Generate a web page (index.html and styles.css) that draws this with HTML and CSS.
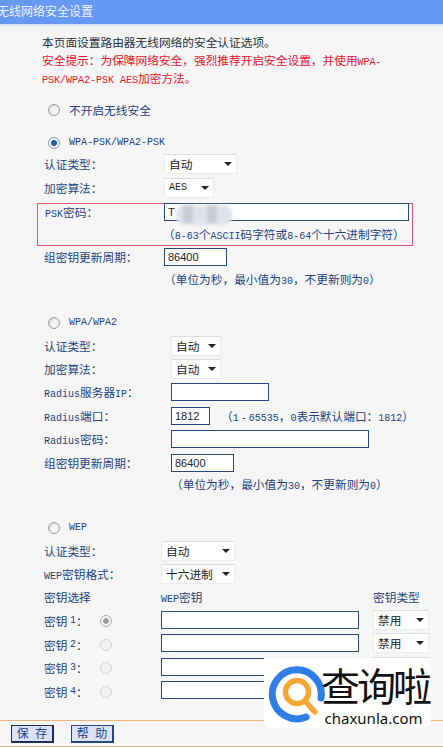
FILE: index.html
```html
<!DOCTYPE html>
<html lang="zh-CN">
<head>
    <meta charset="UTF-8">
    <meta name="viewport" content="width=device-width, initial-scale=1.0">
    <title>无线网络安全设置</title>
    <link rel="stylesheet" href="styles.css">
</head>
<body>
    <div class="title">无线网络安全设置</div>

    <div class="intro">
        <p>本页面设置路由器无线网络的安全认证选项&#x3002;</p>
        <p class="warn">安全提示&#xFF1A;为保障网络安全&#xFF0C;强烈推荐开启安全设置&#xFF0C;并使用<span class="en">WPA-</span></p>
        <p class="warn"><span class="en">PSK/WPA2-PSK AES</span>加密方法&#x3002;</p>
    </div>

    <div class="choice off"><span class="radio"></span><span>不开启无线安全</span></div>

    <div class="choice psk"><span class="radio on"></span><span class="en">WPA-PSK/WPA2-PSK</span></div>
    <div class="form form-a">
        <div class="row"><label>认证类型&#xFF1A;</label><div class="select w73">自动<i></i></div></div>
        <div class="row"><label>加密算法&#xFF1A;</label><div class="select w50"><span class="en">AES</span><i></i></div></div>
        <div class="psk-box">
            <div class="row"><label><span class="en">PSK</span>密码&#xFF1A;</label>
                <div class="pass"><input class="w245" type="text" value="T"><span class="smudge"><b></b><b></b></span></div>
            </div>
            <div class="hint">&#xFF08;<span class="en">8-63</span>个<span class="en">ASCII</span>码字符或<span class="en">8-64</span>个十六进制字符&#xFF09;</div>
        </div>
        <div class="row"><label>组密钥更新周期&#xFF1A;</label><input class="w63" type="text" value="86400"></div>
        <div class="hint">&#xFF08;单位为秒&#xFF0C;最小值为<span class="en">30</span>&#xFF0C;不更新则为<span class="en">0</span>&#xFF09;</div>
    </div>

    <div class="choice wpa"><span class="radio"></span><span class="en">WPA/WPA2</span></div>
    <div class="form form-b">
        <div class="row"><label>认证类型&#xFF1A;</label><div class="select w50">自动<i></i></div></div>
        <div class="row"><label>加密算法&#xFF1A;</label><div class="select w50">自动<i></i></div></div>
        <div class="row"><label><span class="en">Radius</span>服务器<span class="en">IP</span>&#xFF1A;</label><input class="w98" type="text"></div>
        <div class="row"><label><span class="en">Radius</span>端口&#xFF1A;</label><input class="w39" type="text" value="1812"><span class="port-hint">&#xFF08;<span class="en">1 - 65535</span>&#xFF0C;<span class="en">0</span>表示默认端口&#xFF1A;<span class="en">1812</span>&#xFF09;</span></div>
        <div class="row"><label><span class="en">Radius</span>密码&#xFF1A;</label><input class="w198" type="text"></div>
        <div class="row"><label>组密钥更新周期&#xFF1A;</label><input class="w63" type="text" value="86400"></div>
        <div class="hint">&#xFF08;单位为秒&#xFF0C;最小值为<span class="en">30</span>&#xFF0C;不更新则为<span class="en">0</span>&#xFF09;</div>
    </div>

    <div class="choice wep"><span class="radio"></span><span class="en">WEP</span></div>
    <div class="form form-c">
        <div class="row"><label>认证类型&#xFF1A;</label><div class="select w74">自动<i></i></div></div>
        <div class="row"><label><span class="en">WEP</span>密钥格式&#xFF1A;</label><div class="select w74">十六进制<i></i></div></div>
        <div class="keys">
            <div>密钥选择</div><div><span class="en">WEP</span>密钥</div><div>密钥类型</div>
            <div class="key-name">密钥 <span class="en">1</span>&#xFF1A;<span class="radio dot"></span></div><input class="w198" type="text"><div class="select w56">禁用<i></i></div>
            <div class="key-name">密钥 <span class="en">2</span>&#xFF1A;<span class="radio faint"></span></div><input class="w198" type="text"><div class="select w56">禁用<i></i></div>
            <div class="key-name">密钥 <span class="en">3</span>&#xFF1A;<span class="radio faint"></span></div><input class="w198" type="text"><div class="select w56"><i class="push"></i></div>
            <div class="key-name">密钥 <span class="en">4</span>&#xFF1A;<span class="radio faint"></span></div><input class="w198" type="text"><div class="select w56"><i class="push"></i></div>
        </div>
    </div>

    <div class="actions">
        <button class="btn active">保 存</button>
        <button class="btn">帮 助</button>
    </div>

    <div class="stamp">
        <svg class="stamp-logo" width="58" height="62" viewBox="0 0 58 62">
            <path d="M53 33 A24.5 24.5 0 1 0 38 52" fill="none" stroke="#2f7ee8" stroke-width="7" stroke-linecap="round"/>
            <circle cx="29" cy="27" r="11.5" fill="none" stroke="#f7a733" stroke-width="5.5"/>
            <path d="M37 36 L47 47" fill="none" stroke="#f7a733" stroke-width="5.5" stroke-linecap="round"/>
        </svg>
        <div class="stamp-text">
            <div class="stamp-name">查询啦</div>
            <div class="stamp-url">chaxunla.com</div>
        </div>
    </div>
</body>
</html>
```

FILE: styles.css
```css
html, body {
    margin: 0;
    height: 748px;
    overflow: hidden;
}
body {
    position: relative;
    background-color: #f6f6f6;
    color: #23437f;
    font-family: "Noto Sans CJK SC", "Liberation Serif", sans-serif;
    font-size: 11.7px;
    line-height: 18px;
}
p {
    margin: 0;
}
.en {
    font-family: "Liberation Mono", monospace;
    font-size: 10px;
    line-height: 1;
}
.title {
    height: 24px;
    line-height: 22px;
    text-indent: -3px;
    background-color: #6699f4;
    color: #eef3ff;
    font-size: 12px;
    border-bottom: 2px solid #d9e4f7;
    overflow: hidden;
}
.intro {
    margin: 7px 0 0 42px;
    width: 345px;
    color: #26303f;
}
.warn {
    color: #f0102a;
}
.choice {
    display: flex;
    align-items: center;
    gap: 9px;
    height: 18px;
    margin-left: 48px;
}
.off { margin-top: 14px; }
.psk { margin-top: 15px; }
.wpa { margin-top: 21px; }
.wep { margin-top: 20.6px; }
.radio {
    display: inline-block;
    box-sizing: border-box;
    flex: none;
    width: 12px;
    height: 12px;
    border-radius: 50%;
    border: 1px solid #9f9f9f;
    background: radial-gradient(circle at 60% 60%, #f4f4f4 40%, #c4c4c4);
}
.radio.on {
    border-color: #8f9bb0;
    background: radial-gradient(circle, #1f5fa8 38%, #f2f4f8 46%);
}
.radio.dot {
    border-color: #aaa;
    background: radial-gradient(circle, #9a9a9a 36%, #f4f4f4 44%);
}
.radio.faint {
    border-color: #d0d0d0;
    background: #f2f2f2;
}
.form {
    margin-left: 44px;
}
.row {
    display: flex;
    align-items: center;
    height: 24px;
}
.form-a label { width: 120px; }
.form-b { margin-top: 2px; }
.form-b .row { height: 23.4px; }
.form-b label { width: 127px; }
.form-c { margin-top: 2px; }
.form-c .row { height: 23.5px; }
.form-c label { width: 117px; }
input {
    box-sizing: border-box;
    height: 18px;
    padding: 0 3px;
    border: 1px solid #27487f;
    background-color: #fff;
    color: #222;
    font-family: "Liberation Sans", sans-serif;
    font-size: 11px;
    outline: none;
}
.w39 { width: 39px; }
.w63 { width: 63px; }
.w98 { width: 98px; }
.w198 { width: 198px; }
.w245 { width: 245px; }
.select {
    display: flex;
    align-items: center;
    justify-content: space-between;
    box-sizing: border-box;
    height: 20px;
    padding: 0 4px;
    border: 1px solid #ececec;
    border-top-color: #ddd;
    background-color: #fff;
    color: #222;
}
.select .en {
    color: #222;
}
.select i {
    width: 0;
    height: 0;
    border-left: 4px solid transparent;
    border-right: 4px solid transparent;
    border-top: 4px solid #222;
}
.select .push {
    margin-left: auto;
}
.w50 { width: 50px; }
.w56 { width: 56px; }
.w73 { width: 73px; }
.w74 { width: 74px; }
.hint {
    height: 24px;
    line-height: 20px;
    padding-left: 120px;
}
.form-b .hint {
    padding-left: 127px;
}
.psk-box {
    box-sizing: border-box;
    height: 43px;
    margin: 3px 30px -1px -7px;
    padding-left: 7px;
    border: 1px solid #e0566e;
}
.psk-box .row {
    height: 18px;
    margin-top: -1px;
}
.psk-box label {
    width: 119px;
}
.psk-box .hint {
    padding-left: 118px;
    height: 22px;
    line-height: 26px;
}
.pass {
    position: relative;
    display: flex;
}
.smudge {
    position: absolute;
    left: 12px;
    top: 2px;
    display: flex;
    gap: 14px;
    width: 56px;
    height: 20px;
    padding-left: 7px;
    box-sizing: border-box;
    border-radius: 8px;
    background-color: #dfe3ee;
    filter: blur(1.5px);
}
.smudge b {
    width: 10px;
    height: 18px;
    background-color: #c6cbd6;
}
.port-hint {
    margin-left: 11px;
}
.port-hint .en:first-of-type {
    word-spacing: -4px;
}
.keys {
    display: grid;
    grid-template-columns: 117px 212px 56px;
    grid-template-rows: 22px repeat(4, 23.5px);
    align-items: center;
}
.key-name {
    display: flex;
    align-items: center;
    white-space: pre;
    padding-top: 3px;
}
.key-name .radio {
    margin-left: 12px;
}
.actions {
    position: absolute;
    left: 0;
    right: 0;
    top: 720px;
    box-sizing: border-box;
    height: 27px;
    display: flex;
    align-items: center;
    gap: 17px;
    padding-left: 11px;
    border-top: 1px solid #f3b27c;
    border-bottom: 1px solid #e9bb8c;
}
.btn {
    box-sizing: border-box;
    width: 43px;
    height: 18px;
    padding: 0;
    border: 1px solid #27487f;
    border-right-width: 2px;
    border-bottom-width: 2px;
    background-color: #dbe2fb;
    color: #23437f;
    font-family: "Noto Sans CJK SC", sans-serif;
    font-size: 12px;
    line-height: 14px;
    word-spacing: 4px;
}
.btn.active {
    border-color: #1a2f5c;
}
.stamp {
    position: absolute;
    left: 264px;
    top: 658px;
    display: flex;
    width: 167px;
    height: 70px;
    background-color: #fff;
    border-radius: 0 0 8px 8px;
}
.stamp-logo {
    margin: 7px 0 0 4px;
    flex: none;
}
.stamp-text {
    margin-left: -5px;
    text-align: center;
    color: #111;
}
.stamp-name {
    font-size: 39px;
    line-height: 52px;
    letter-spacing: -3px;
    white-space: nowrap;
}
.stamp-url {
    margin-top: -1px;
    padding-right: 3px;
    font-family: "Noto Sans", sans-serif;
    font-size: 15px;
    line-height: 18px;
}
```
